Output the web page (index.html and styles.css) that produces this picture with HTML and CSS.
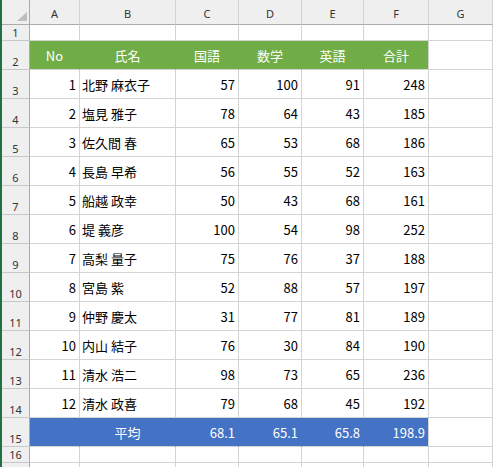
FILE: index.html
```html
<!DOCTYPE html>
<html lang="ja">
<head>
<meta charset="utf-8">
<link rel="stylesheet" href="styles.css">
</head>
<body>
<div class="window">
  <div class="edge"></div>
  <div class="sheet">
    <div class="ch corner"><svg width="10" height="9" viewBox="0 0 10 9"><polygon points="10,0 10,9 0,9" fill="#bdbdbd"/></svg></div>
    <div class="ch">A</div><div class="ch">B</div><div class="ch">C</div><div class="ch">D</div><div class="ch">E</div><div class="ch">F</div><div class="ch">G</div>

    <div class="rh">1</div><div class="c"></div><div class="c"></div><div class="c"></div><div class="c"></div><div class="c"></div><div class="c"></div><div class="c"></div>

    <div class="rh">2</div>
    <div class="c hd">No</div><div class="c hd">氏名</div><div class="c hd">国語</div><div class="c hd">数学</div><div class="c hd">英語</div><div class="c hd last">合計</div><div class="c"></div>

    <div class="rh">3</div><div class="c n">1</div><div class="c t">北野 麻衣子</div><div class="c n">57</div><div class="c n">100</div><div class="c n">91</div><div class="c n">248</div><div class="c"></div>
    <div class="rh">4</div><div class="c n">2</div><div class="c t">塩見 雅子</div><div class="c n">78</div><div class="c n">64</div><div class="c n">43</div><div class="c n">185</div><div class="c"></div>
    <div class="rh">5</div><div class="c n">3</div><div class="c t">佐久間 春</div><div class="c n">65</div><div class="c n">53</div><div class="c n">68</div><div class="c n">186</div><div class="c"></div>
    <div class="rh">6</div><div class="c n">4</div><div class="c t">長島 早希</div><div class="c n">56</div><div class="c n">55</div><div class="c n">52</div><div class="c n">163</div><div class="c"></div>
    <div class="rh">7</div><div class="c n">5</div><div class="c t">船越 政幸</div><div class="c n">50</div><div class="c n">43</div><div class="c n">68</div><div class="c n">161</div><div class="c"></div>
    <div class="rh">8</div><div class="c n">6</div><div class="c t">堤 義彦</div><div class="c n">100</div><div class="c n">54</div><div class="c n">98</div><div class="c n">252</div><div class="c"></div>
    <div class="rh">9</div><div class="c n">7</div><div class="c t">高梨 量子</div><div class="c n">75</div><div class="c n">76</div><div class="c n">37</div><div class="c n">188</div><div class="c"></div>
    <div class="rh">10</div><div class="c n">8</div><div class="c t">宮島 紫</div><div class="c n">52</div><div class="c n">88</div><div class="c n">57</div><div class="c n">197</div><div class="c"></div>
    <div class="rh">11</div><div class="c n">9</div><div class="c t">仲野 慶太</div><div class="c n">31</div><div class="c n">77</div><div class="c n">81</div><div class="c n">189</div><div class="c"></div>
    <div class="rh">12</div><div class="c n">10</div><div class="c t">内山 結子</div><div class="c n">76</div><div class="c n">30</div><div class="c n">84</div><div class="c n">190</div><div class="c"></div>
    <div class="rh">13</div><div class="c n">11</div><div class="c t">清水 浩二</div><div class="c n">98</div><div class="c n">73</div><div class="c n">65</div><div class="c n">236</div><div class="c"></div>
    <div class="rh">14</div><div class="c n">12</div><div class="c t">清水 政喜</div><div class="c n">79</div><div class="c n">68</div><div class="c n">45</div><div class="c n">192</div><div class="c"></div>

    <div class="rh">15</div>
    <div class="c av"></div><div class="c av ctr">平均</div><div class="c av n">68.1</div><div class="c av n">65.1</div><div class="c av n">65.8</div><div class="c av n last">198.9</div><div class="c"></div>

    <div class="rh">16</div><div class="c"></div><div class="c"></div><div class="c"></div><div class="c"></div><div class="c"></div><div class="c"></div><div class="c"></div>
    <div class="rh"></div><div class="c"></div><div class="c"></div><div class="c"></div><div class="c"></div><div class="c"></div><div class="c"></div><div class="c"></div>
  </div>
</div>
</body>
</html>
```

FILE: styles.css
```css
html, body {
  margin: 0;
  padding: 0;
  background: #ffffff;
}
body {
  width: 493px;
  height: 467px;
  overflow: hidden;
}
.window {
  display: flex;
  height: 467px;
}
.edge {
  width: 2px;
  flex: none;
  background: #1f7145;
}
.sheet {
  flex: 1;
  display: grid;
  grid-template-columns: 28px 50px 96px 63px 63px 62px 65px 1fr;
  grid-template-rows: 25px 16px 29px repeat(13, 29px) 16px 20px;
  font-family: "Noto Sans CJK JP", "Noto Sans", sans-serif;
  font-size: 13px;
  color: #000;
}
.sheet > div {
  box-sizing: border-box;
  min-width: 0;
  overflow: hidden;
  white-space: nowrap;
}
.ch {
  background: #efefef;
  border-right: 1px solid #d2d2d2;
  border-bottom: 1px solid #ababab;
  font-family: "Noto Sans", "DejaVu Sans", sans-serif;
  font-size: 11px;
  color: #333;
  display: flex;
  align-items: center;
  justify-content: center;
  padding-top: 3px;
}
.corner {
  border-right: 1px solid #ababab;
  justify-content: flex-end;
  align-items: flex-end;
  padding: 0 2px 3px 0;
}
.corner svg { display: block; }
.rh {
  background: #efefef;
  border-right: 1px solid #ababab;
  border-bottom: 1px solid #c8c8c8;
  font-family: "Noto Sans", "DejaVu Sans", sans-serif;
  font-size: 11px;
  line-height: 1;
  color: #333;
  display: flex;
  align-items: flex-end;
  justify-content: center;
  padding-bottom: 2px;
}
.c {
  border-right: 1px solid #d4d4d4;
  border-bottom: 1px solid #d4d4d4;
  display: flex;
  align-items: center;
  line-height: 1;
}
.n {
  justify-content: flex-end;
  padding-right: 3px;
}
.t {
  padding-left: 2px;
}
.hd {
  background: #70ad47;
  border-right-color: #70ad47;
  color: #fff;
  justify-content: center;
}
.av {
  background: #4472c4;
  border-right-color: #4472c4;
  color: #fff;
}
.ctr {
  justify-content: center;
}
.last {
  border-right-color: #d4d4d4;
}
```
